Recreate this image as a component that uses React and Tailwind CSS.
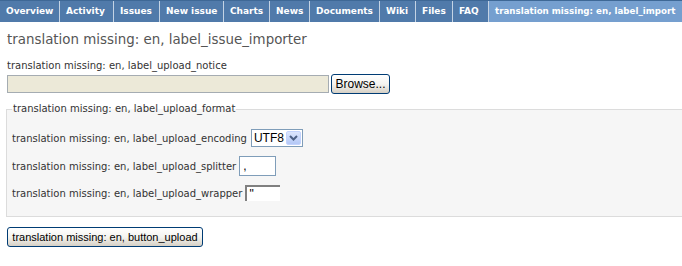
import React from "react";

const tabs = [
  ["Overview", 59],
  ["Activity", 54],
  ["Issues", 46],
  ["New issue", 64],
  ["Charts", 46],
  ["News", 40],
  ["Documents", 70],
  ["Wiki", 36],
  ["Files", 37],
  ["FAQ", 36],
];

const xpBtn =
  "border border-[#003c74] rounded-[3px] bg-gradient-to-b from-[#ffffff] via-[#f4f4f0] to-[#d6d0c5] text-black font-['Liberation_Sans',Arial,sans-serif] leading-none whitespace-nowrap";

export default function App() {
  return (
    <div className="w-[682px] h-[266px] bg-white overflow-hidden font-['DejaVu_Sans',Verdana,sans-serif]">
      <div className="flex h-[22px] bg-[#507aaa] border-t border-[#3e6896]">
        {tabs.map(([t, w], i) => (
          <div
            key={t}
            style={{ width: w }}
            className={`flex items-center pl-[6px] text-white font-bold text-[9px] whitespace-nowrap ${i > 0 ? "border-l border-[#c4d3e4]" : ""}`}
          >
            {t}
          </div>
        ))}
        <div className="flex-1 flex items-center pl-[6px] bg-[#759fcf] border-l border-[#c4d3e4] text-white font-bold text-[8.7px] whitespace-nowrap overflow-hidden">
          translation missing: en, label_import
        </div>
      </div>

      <div className="px-[7px]">
        <h2 className="mt-[10px] text-[13.4px] leading-[16px] text-[#555]">
          translation missing: en, label_issue_importer
        </h2>

        <div className="mt-[12px] text-[10px] leading-[12px] text-[#333]">
          translation missing: en, label_upload_notice
        </div>
        <div className="mt-[2px] flex items-center gap-[2px]">
          <div className="w-[322px] h-[18px] bg-[#ece9d8] border border-[#a5acb2]" />
          <button className={`${xpBtn} text-[12px] w-[59px] h-[20px]`}>Browse...</button>
        </div>

        <fieldset className="relative mt-[9px] -mr-[7px] -ml-[1px] h-[114px] bg-[#f6f6f6] border border-[#dcdcdc] border-r-0 px-[5px] pt-0">
          <legend className="px-[1px] text-[10px] leading-[12px] text-[#333] bg-transparent">
            translation missing: en, label_upload_format
          </legend>
          <div className="mt-[14px] flex items-center h-[18px] text-[10px] text-[#333]">
            <span>translation missing: en, label_upload_encoding</span>
            <div className="ml-[4px] w-[52px] h-[18px] flex items-center border border-[#7f9db9] bg-white">
              <span className="flex-none pl-[2px] text-[12px] leading-none font-['Liberation_Sans',Arial,sans-serif] text-black">
                UTF8
              </span>
              <div className="ml-auto flex-none w-[15px] h-[14px] mr-[1px] rounded-[2px] bg-gradient-to-b from-[#dce6fd] to-[#b4c8f6] border border-[#c3d3fd] flex items-center justify-center">
                <svg width="9" height="6" viewBox="0 0 9 6">
                  <path d="M1 1 L4.5 4.5 L8 1" fill="none" stroke="#4d6185" strokeWidth="2" />
                </svg>
              </div>
            </div>
          </div>
          <div className="mt-[9px] flex items-center h-[20px] text-[10px] text-[#333]">
            <span>translation missing: en, label_upload_splitter</span>
            <div className="ml-[3px] w-[37px] h-[20px] border border-[#7f9db9] bg-white pl-[3px] pt-[3px] text-[12px] leading-none text-black font-['Liberation_Sans',Arial,sans-serif]">
              ,
            </div>
          </div>
          <div className="mt-[9px] flex items-center h-[16px] text-[10px] text-[#333]">
            <span>translation missing: en, label_upload_wrapper</span>
            <div className="ml-[3px] w-[35px] h-[16px] border-t-2 border-l-2 border-t-[#808080] border-l-[#808080] bg-white pl-[2px] text-[12px] leading-[14px] text-black font-['Liberation_Sans',Arial,sans-serif]">
              "
            </div>
          </div>
        </fieldset>

        <button className={`${xpBtn} text-[11px] mt-[10px] w-[196px] h-[20px] px-[4px]`}>
          translation missing: en, button_upload
        </button>
      </div>
    </div>
  );
}
